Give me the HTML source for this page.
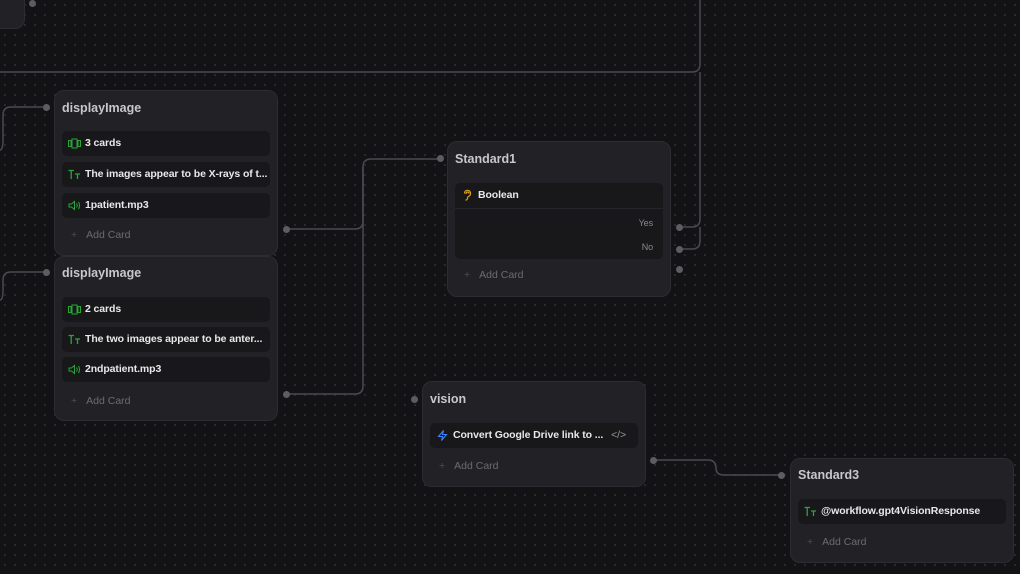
<!DOCTYPE html><html><head><style>
body{margin:0;width:1020px;height:574px;overflow:hidden;background:#131316;background-image:radial-gradient(#2a2a2f 1px,transparent 1.2px);background-size:10px 10px;font-family:"Liberation Sans",sans-serif;position:relative}
.n{position:absolute;width:224px;background:#222226;border:1px solid #2c2c31;border-radius:10px;box-sizing:border-box}
.t{position:absolute;left:7px;font-weight:bold;font-size:12.5px;color:#c8c8cc}
.r{position:absolute;left:7px;right:7px;height:25px;background:#18181b;border-radius:5px;color:#e8e8ea;font-size:10.5px;font-weight:bold;line-height:25px;padding-left:23px;box-sizing:border-box;white-space:nowrap;letter-spacing:-0.1px}
.i{position:absolute;left:6px;top:7px;width:13px;height:11px}
.a{position:absolute;left:16px;font-size:10.5px;color:#6b6b70}
.a:before{content:"+";margin-right:9px;color:#4e4e52}
.d{position:absolute;width:7px;height:7px;border-radius:50%;background:#5c5c62}
</style></head><body>
<svg width="1020" height="574" style="position:absolute;left:0;top:0" fill="none" stroke="#4a4a50" stroke-width="1.5">
<path d="M0 72H692Q700 72 700 64V0"/>
<path d="M680 227H692Q700 227 700 219V72"/>
<path d="M680 249H692Q700 249 700 241V227"/>
<path d="M286 229H355Q363 229 363 221V167Q363 159 371 159H440"/>
<path d="M286 394H355Q363 394 363 386V167"/>
<path d="M654 460H708Q716 460 716 468V468Q716 475 724 475H782"/>
<path d="M0 150Q3 150 3 140V115Q3 107 11 107H47"/>
<path d="M0 300Q3 300 3 290V280Q3 272 11 272H47"/>
</svg>
<div class="n" style="left:-30px;top:-20px;width:55px;height:49px"></div>
<div class="d" style="left:29px;top:0"></div>
<div class="n" style="left:54px;top:90px;height:166px"><div class="t" style="top:10px">displayImage</div>
<div class="r" style="top:40px"><svg class="i" viewBox="0 0 13 11" fill="none" stroke="#2aa53a"><rect x="4" y="1" width="5" height="9"/><rect x="0.5" y="2.5" width="2.5" height="6"/><rect x="10" y="2.5" width="2.5" height="6"/></svg>3 cards</div>
<div class="r" style="top:71px"><svg class="i" viewBox="0 0 13 11" fill="none" stroke="#2aa53a" stroke-width="1.3"><path d="M0.5 1.5H6M3.2 1.5V10M7 5H12M9.5 5V10"/></svg>The images appear to be X-rays of t...</div>
<div class="r" style="top:102px"><svg class="i" viewBox="0 0 13 11" fill="none" stroke="#2aa53a"><path d="M1 4H3.5L6.5 1.5V9.5L3.5 7H1Z"/><path d="M8.5 3.5Q10 5.5 8.5 7.5M10.5 2Q12.5 5.5 10.5 9"/></svg>1patient.mp3</div>
<div class="a" style="top:138px">Add Card</div></div>
<div class="n" style="left:54px;top:256px;height:165px"><div class="t" style="top:9px">displayImage</div>
<div class="r" style="top:40px"><svg class="i" viewBox="0 0 13 11" fill="none" stroke="#2aa53a"><rect x="4" y="1" width="5" height="9"/><rect x="0.5" y="2.5" width="2.5" height="6"/><rect x="10" y="2.5" width="2.5" height="6"/></svg>2 cards</div>
<div class="r" style="top:70px"><svg class="i" viewBox="0 0 13 11" fill="none" stroke="#2aa53a" stroke-width="1.3"><path d="M0.5 1.5H6M3.2 1.5V10M7 5H12M9.5 5V10"/></svg>The two images appear to be anter...</div>
<div class="r" style="top:100px"><svg class="i" viewBox="0 0 13 11" fill="none" stroke="#2aa53a"><path d="M1 4H3.5L6.5 1.5V9.5L3.5 7H1Z"/><path d="M8.5 3.5Q10 5.5 8.5 7.5M10.5 2Q12.5 5.5 10.5 9"/></svg>2ndpatient.mp3</div>
<div class="a" style="top:138px">Add Card</div></div>
<div class="n" style="left:447px;top:141px;height:156px"><div class="t" style="top:10px">Standard1</div>
<div class="r" style="top:41px;height:76px;line-height:25px"><svg class="i" viewBox="0 0 13 11" fill="none" stroke="#d9a020" stroke-width="1.2" style="height:12px;top:6px"><path d="M3.5 4Q3.5 0.8 6.5 0.8Q9.5 0.8 9.5 4Q9.5 6 7.5 7Q6.5 7.5 6.5 9Q6 10.8 4.5 10.5M5 4.5Q5 2.5 6.5 2.5Q8 2.5 8 4"/></svg>Boolean
<div style="position:absolute;left:0;right:0;top:25px;border-top:1px solid #26262a"></div>
<div style="position:absolute;right:10px;top:33px;line-height:14px;font-size:9px;color:#8a8a8e;font-weight:normal">Yes</div>
<div style="position:absolute;right:10px;top:57px;line-height:14px;font-size:9px;color:#8a8a8e;font-weight:normal">No</div></div>
<div class="a" style="top:127px">Add Card</div></div>
<div class="n" style="left:422px;top:381px;height:106px"><div class="t" style="top:10px">vision</div>
<div class="r" style="top:41px"><svg class="i" viewBox="0 0 13 11" fill="none" stroke="#3b82f6" stroke-width="1.1"><path d="M7.5 0.5L2.5 6.5H6.5L5.5 10.5L10.5 4.5H6.5Z"/></svg>Convert Google Drive link to ...<span style="position:absolute;right:12px;color:#9a9a9e;font-weight:normal">&lt;/&gt;</span></div>
<div class="a" style="top:78px">Add Card</div></div>
<div class="n" style="left:790px;top:458px;height:105px"><div class="t" style="top:9px">Standard3</div>
<div class="r" style="top:40px"><svg class="i" viewBox="0 0 13 11" fill="none" stroke="#2aa53a" stroke-width="1.3"><path d="M0.5 1.5H6M3.2 1.5V10M7 5H12M9.5 5V10"/></svg>@workflow.gpt4VisionResponse</div>
<div class="a" style="top:77px">Add Card</div></div>
<div class="d" style="left:43px;top:104px"></div><div class="d" style="left:43px;top:269px"></div>
<div class="d" style="left:283px;top:226px"></div><div class="d" style="left:283px;top:391px"></div>
<div class="d" style="left:437px;top:155px"></div>
<div class="d" style="left:676px;top:224px"></div><div class="d" style="left:676px;top:246px"></div><div class="d" style="left:676px;top:266px"></div>
<div class="d" style="left:411px;top:396px"></div><div class="d" style="left:650px;top:457px"></div><div class="d" style="left:778px;top:472px"></div>
</body></html>
